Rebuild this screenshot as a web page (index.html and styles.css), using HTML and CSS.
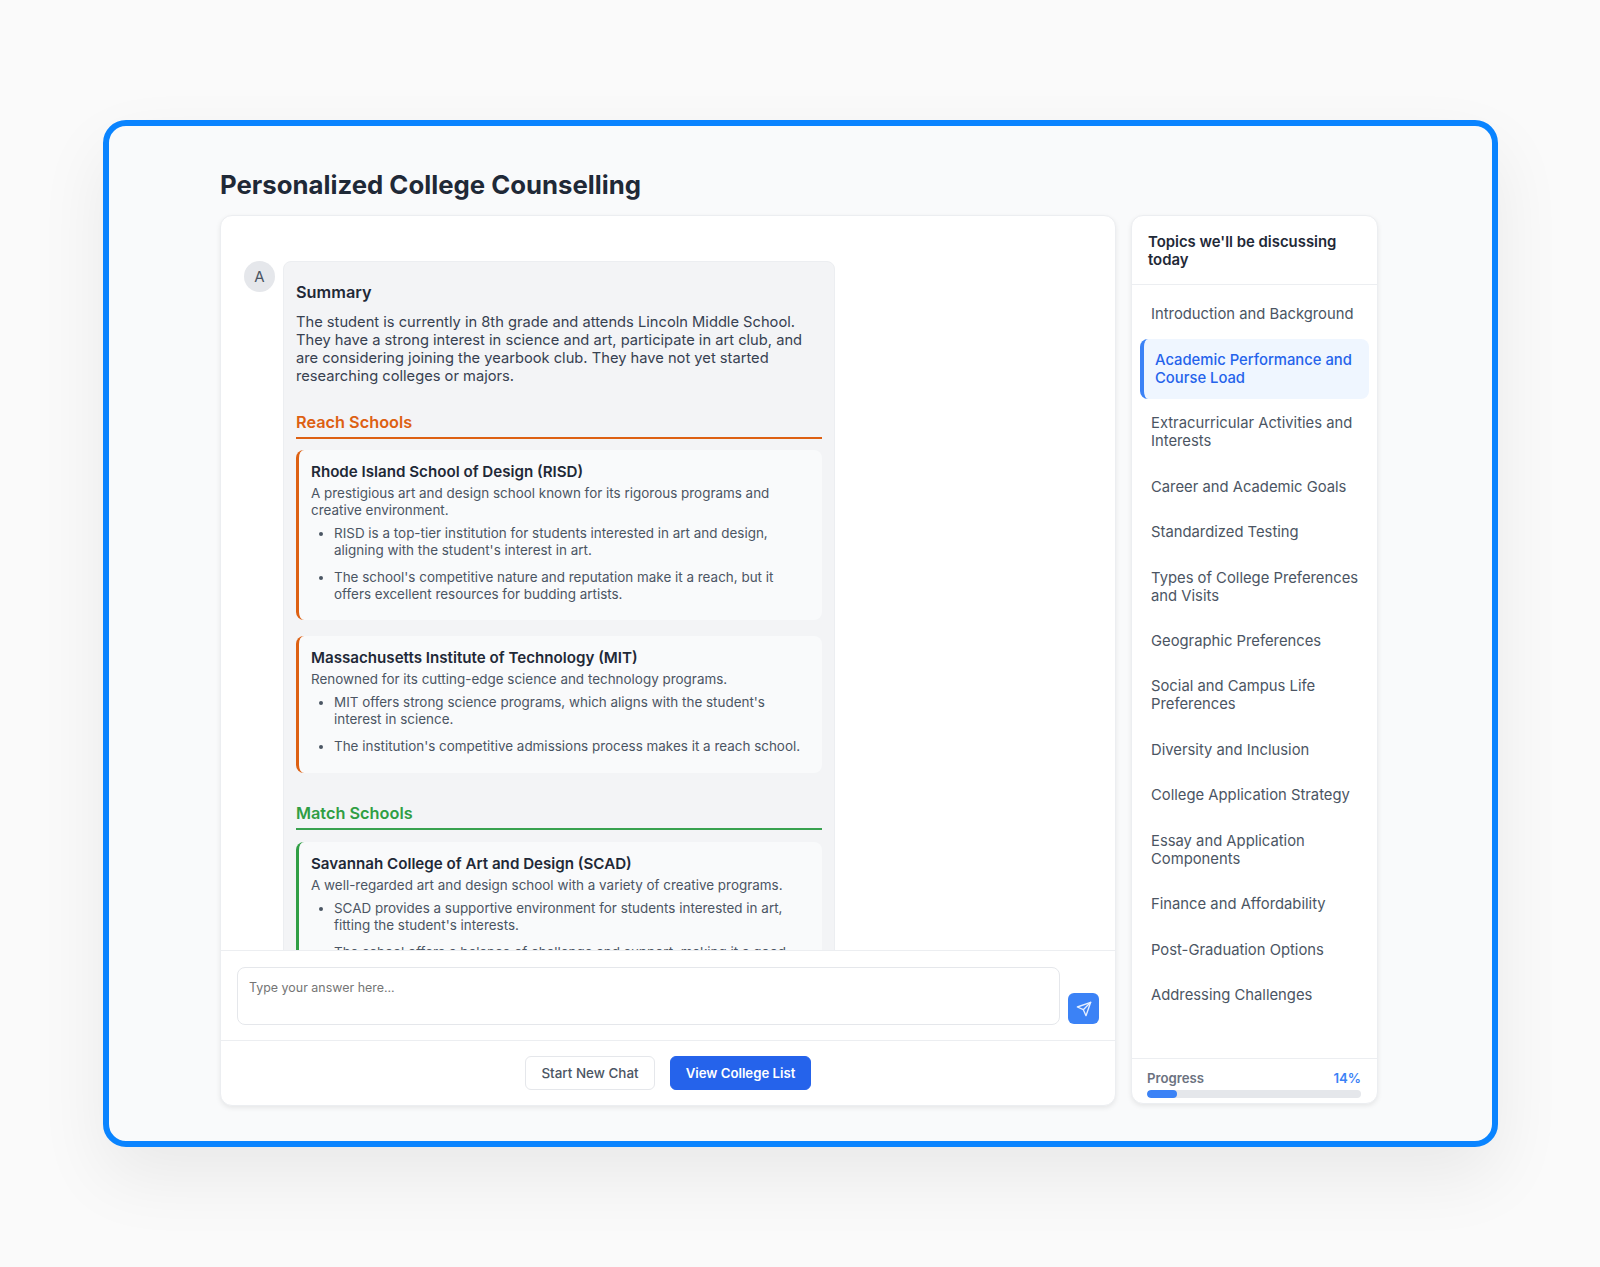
FILE: index.html
```html
<!DOCTYPE html>
<html lang="en">
<head>
<meta charset="utf-8">
<title>Personalized College Counselling</title>
<link rel="stylesheet" href="styles.css">
</head>
<body>
<div class="frame">
  <h1 class="title">Personalized College Counselling</h1>
  <div class="columns">
    <main class="chat">
      <div class="messages">
        <div class="avatar">A</div>
        <div class="bubble">
          <h2 class="summary-title">Summary</h2>
          <p class="summary">The student is currently in 8th grade and attends Lincoln Middle School. They have a strong interest in science and art, participate in art club, and are considering joining the yearbook club. They have not yet started researching colleges or majors.</p>

          <h3 class="tier reach">Reach Schools</h3>
          <section class="school reach-card">
            <h4>Rhode Island School of Design (RISD)</h4>
            <p>A prestigious art and design school known for its rigorous programs and creative environment.</p>
            <ul>
              <li>RISD is a top-tier institution for students interested in art and design, aligning with the student's interest in art.</li>
              <li>The school's competitive nature and reputation make it a reach, but it offers excellent resources for budding artists.</li>
            </ul>
          </section>
          <section class="school reach-card">
            <h4>Massachusetts Institute of Technology (MIT)</h4>
            <p>Renowned for its cutting-edge science and technology programs.</p>
            <ul>
              <li>MIT offers strong science programs, which aligns with the student's interest in science.</li>
              <li>The institution's competitive admissions process makes it a reach school.</li>
            </ul>
          </section>

          <h3 class="tier match">Match Schools</h3>
          <section class="school match-card">
            <h4>Savannah College of Art and Design (SCAD)</h4>
            <p>A well-regarded art and design school with a variety of creative programs.</p>
            <ul>
              <li>SCAD provides a supportive environment for students interested in art, fitting the student's interests.</li>
              <li>The school offers a balance of challenge and support, making it a good match for the student.</li>
            </ul>
          </section>
        </div>
      </div>
      <div class="composer">
        <div class="answer">Type your answer here...</div>
        <button class="send" aria-label="Send">
          <svg viewBox="0 0 24 24" width="16" height="16" fill="none" stroke="currentColor" stroke-width="2" stroke-linecap="round" stroke-linejoin="round"><path d="M22 2 11 13"/><path d="M22 2 15 22 11 13 2 9Z"/></svg>
        </button>
      </div>
      <div class="actions">
        <button class="btn ghost">Start New Chat</button>
        <button class="btn primary">View College List</button>
      </div>
    </main>
    <aside class="topics">
      <h2 class="topics-head">Topics we'll be discussing today</h2>
      <ul class="topic-list">
        <li>Introduction and Background</li>
        <li class="active">Academic Performance and Course Load</li>
        <li>Extracurricular Activities and Interests</li>
        <li>Career and Academic Goals</li>
        <li>Standardized Testing</li>
        <li>Types of College Preferences and Visits</li>
        <li>Geographic Preferences</li>
        <li>Social and Campus Life Preferences</li>
        <li>Diversity and Inclusion</li>
        <li>College Application Strategy</li>
        <li>Essay and Application Components</li>
        <li>Finance and Affordability</li>
        <li>Post-Graduation Options</li>
        <li>Addressing Challenges</li>
      </ul>
      <div class="progress">
        <div class="progress-row"><span>Progress</span><span class="pct">14%</span></div>
        <div class="track"><div class="fill" style="width:14%"></div></div>
      </div>
    </aside>
  </div>
</div>
</body>
</html>
```
FILE: styles.css
```css
* { box-sizing: border-box; }
html, body { margin: 0; height: 1267px; overflow: hidden; }
body {
  background: #fafafa;
  font-family: Inter, "Noto Sans", sans-serif;
  color: #1f2937;
  padding: 120px 102px 0 103px;
}
h1, h2, h3, h4, p, ul { margin: 0; padding: 0; }
.frame {
  height: 1027px;
  background: #f9fafb;
  border: 6.5px solid #0a84ff;
  border-radius: 23px;
  box-shadow: 0 30px 70px rgba(0, 0, 0, 0.07);
  padding: 41.5px 0 0 111px;
}
.title {
  font-size: 25.75px;
  line-height: 34px;
  font-weight: 700;
  color: #1f2937;
  margin-bottom: 13.5px;
}
.columns { display: flex; gap: 15px; align-items: flex-start; }
.chat {
  width: 896px;
  height: 891px;
  background: #fff;
  border: 1px solid #eceef1;
  border-radius: 12px;
  box-shadow: 0 2px 5px rgba(0, 0, 0, 0.08);
  display: flex;
  flex-direction: column;
  overflow: hidden;
}
.messages {
  height: 734px;
  flex: none;
  overflow: hidden;
  display: flex;
  gap: 8px;
  padding: 45px 0 0 23px;
}
.avatar {
  width: 31px;
  height: 31px;
  flex: none;
  border-radius: 50%;
  background: #e5e7eb;
  color: #4b5563;
  font-size: 15px;
  display: flex;
  align-items: center;
  justify-content: center;
}
.bubble {
  width: 552px;
  flex: none;
  background: #f3f4f6;
  border: 1px solid #eceef1;
  border-radius: 8px;
  padding: 12px;
  align-self: flex-start;
}
.summary-title { font-size: 16.3px; line-height: 36px; font-weight: 600; color: #1f2937; margin-bottom: 3px; }
.summary { font-size: 14.7px; line-height: 18px; color: #374151; }
.tier {
  font-size: 16.3px;
  line-height: 24px;
  font-weight: 600;
  margin-top: 25px;
  padding-bottom: 3px;
  border-bottom: 2px solid;
}
.tier.reach { color: #dd6012; border-color: #dd6012; margin-bottom: 11px; }
.tier.match { color: #2f9e44; border-color: #38a14f; margin-top: 28px; margin-bottom: 12px; }
.school {
  background: #f9fafb;
  border-left: 3px solid;
  border-radius: 8px;
  padding: 13px 12px 18px;
  margin-bottom: 15.5px;
}
.reach-card { border-color: #dd6012; }
.match-card { border-color: #2f9e44; }
.school h4 { font-size: 15.15px; line-height: 18px; font-weight: 600; color: #1f2937; margin-bottom: 4px; }
.school p { font-size: 13.45px; line-height: 16.5px; color: #4b5563; }
.school ul { margin-top: 7px; padding-left: 23px; font-size: 13.45px; line-height: 16.5px; color: #4b5563; }
.school li { margin-bottom: 11px; }
.school li:last-child { margin-bottom: 0; }
.composer {
  height: 91px;
  flex: none;
  border-top: 1px solid #eceef1;
  border-bottom: 1px solid #eceef1;
  padding: 16px 16px 0;
  display: flex;
  gap: 8px;
  align-items: flex-start;
}
.answer {
  width: 825px;
  height: 58px;
  border: 1.5px solid #e5e7eb;
  border-radius: 8px;
  padding: 11px 11px;
  font-size: 12.45px;
  line-height: 18px;
  color: #757575;
}
.send {
  width: 31px;
  height: 31px;
  margin-top: 26px;
  border: 0;
  border-radius: 6px;
  background: #3b82f6;
  color: #e6efff;
  padding: 0;
  display: flex;
  align-items: center;
  justify-content: center;
}
.actions { display: flex; justify-content: center; gap: 15px; padding-top: 15px; }
.btn {
  height: 34px;
  border-radius: 6px;
  font-family: inherit;
  font-size: 13.45px;
  font-weight: 500;
}
.ghost { width: 130px; background: #fff; border: 1px solid #e5e7eb; color: #4b5563; }
.primary { width: 141px; background: #2563eb; border: 1px solid #2563eb; color: #fff; font-size: 13.2px; font-weight: 600; }
.topics {
  width: 247px;
  height: 889px;
  background: #fff;
  border: 1px solid #eceef1;
  border-radius: 12px;
  box-shadow: 0 2px 5px rgba(0, 0, 0, 0.08);
  display: flex;
  flex-direction: column;
  overflow: hidden;
}
.topics-head {
  font-size: 14.9px;
  line-height: 18px;
  font-weight: 600;
  color: #1f2937;
  padding: 17px 15px 0 16px;
  height: 69px;
  flex: none;
  border-bottom: 1.5px solid #eceef1;
}
.topic-list {
  list-style: none;
  flex: 1;
  padding: 8.4px 8px 0;
  display: flex;
  flex-direction: column;
  gap: 3.45px;
}
.topic-list li {
  font-size: 14.8px;
  line-height: 18px;
  color: #4b5563;
  padding: 12px 9px 12px 11px;
}
.topic-list li.active {
  color: #2563eb;
  font-weight: 500;
  background: #eff6ff;
  border-left: 4px solid #3b82f6;
  border-radius: 8px;
}
.progress { flex: none; height: 45px; border-top: 1px solid #eceef1; padding: 11px 16px 0 15px; }
.progress-row {
  display: flex;
  justify-content: space-between;
  font-size: 13.2px;
  line-height: 16px;
  font-weight: 600;
  color: #6b7280;
  margin-bottom: 4px;
}
.pct { color: #3b82f6; font-weight: 600; }
.track { height: 8px; border-radius: 4px; background: #e5e7eb; overflow: hidden; }
.fill { height: 100%; background: #3b82f6; border-radius: 4px; }
```
